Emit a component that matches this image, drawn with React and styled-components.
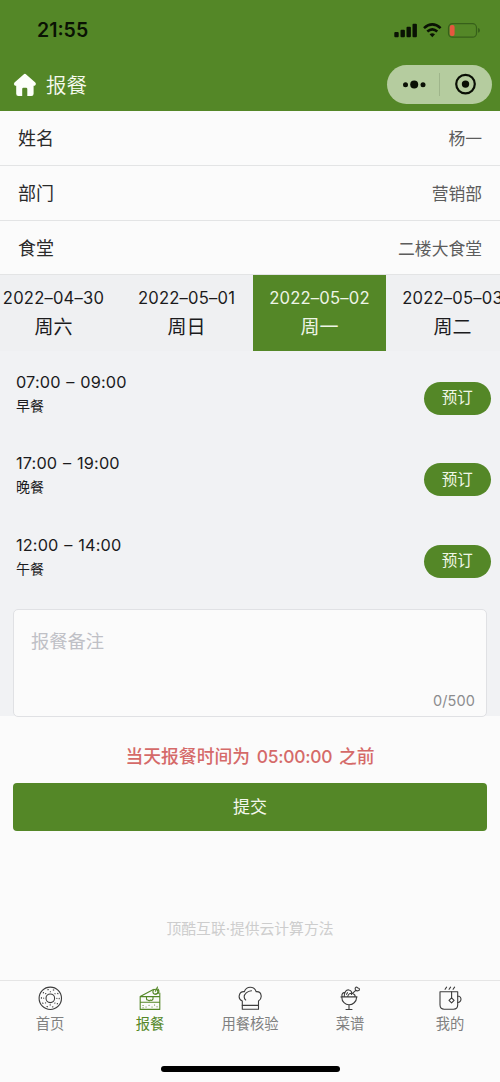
import React, { useState } from 'react';
import styled, { createGlobalStyle } from 'styled-components';

const GREEN = '#548727';

const GlobalStyle = createGlobalStyle`
  * {
    box-sizing: border-box;
  }

  body {
    margin: 0;
    background: #fbfbfb;
    color: #1c1c1c;
    font-family: Inter, 'Noto Sans CJK SC', sans-serif;
  }

  button, textarea {
    font-family: inherit;
  }
`;

const Page = styled.div`
  width: 500px;
  height: 1082px;
  display: flex;
  flex-direction: column;
  overflow: hidden;
`;

const Header = styled.header`
  height: 111px;
  flex: none;
  background: ${GREEN};
`;

const StatusBar = styled.div`
  height: 59px;
  padding: 0 20px 0 37px;
  display: flex;
  align-items: center;
  justify-content: space-between;
`;

const Clock = styled.span`
  font-size: 19.5px;
  font-weight: 600;
  line-height: 24px;
  color: #0a1204;
  padding-top: 1px;
`;

const NavBar = styled.div`
  height: 51px;
  padding: 0 8px 0 13px;
  display: flex;
  align-items: center;
`;

const Title = styled.h1`
  flex: 1;
  margin: 0 0 0 9px;
  padding-top: 2px;
  font-size: 20.5px;
  font-weight: 350;
  line-height: 28px;
  color: #f6faef;
`;

const Capsule = styled.div`
  width: 105px;
  height: 39px;
  border-radius: 20px;
  background: #b5cc9f;
`;

const InfoRow = styled.div`
  height: ${(props) => props.$height}px;
  flex: none;
  padding: 2px 18px 0;
  border-bottom: 1px solid #e3e4e5;
  display: flex;
  align-items: center;
  justify-content: space-between;
  line-height: 26px;
`;

const InfoLabel = styled.span`
  font-size: 18px;
  color: #2a2a2a;
`;

const InfoValue = styled.span`
  font-size: 16.8px;
  color: #5c5c5c;
`;

const Booking = styled.main`
  height: 441px;
  flex: none;
  background: #f1f2f4;
`;

const DateStrip = styled.div`
  display: flex;
  height: 76px;
  margin-left: -13px;
`;

const DateItem = styled.button`
  flex: none;
  width: 133px;
  padding: 10px 0 0;
  border: 0;
  background: ${(props) => (props.$active ? GREEN : '#eff0f2')};
  color: ${(props) => (props.$active ? '#eef5e6' : '#1b1b1d')};
  display: flex;
  flex-direction: column;
  align-items: center;
  white-space: nowrap;
`;

const DateText = styled.span`
  font-size: 16.6px;
  letter-spacing: 0.2px;
  line-height: 26px;
`;

const WeekText = styled.span`
  padding-top: 2px;
  font-size: 19px;
  line-height: 30px;
`;

const Meal = styled.div`
  height: 81.5px;
  padding: 0 9.5px 0 16px;
  display: flex;
  align-items: center;
  justify-content: space-between;
`;

const MealTime = styled.div`
  font-size: 16.3px;
  letter-spacing: 0.15px;
  word-spacing: 1px;
  line-height: 24px;
  color: #1b1b1d;
`;

const MealName = styled.div`
  font-size: 14px;
  line-height: 23px;
  color: #1b1b1d;
`;

const MealInfo = styled.div`
  padding-top: 3px;
`;

const BookButton = styled.button`
  width: 66.5px;
  height: 33px;
  margin-top: 13px;
  padding: 0;
  border: 0;
  border-radius: 17px;
  background: ${GREEN};
  color: #f0f7e6;
  font-size: 15.5px;
  line-height: 24px;
`;

const Remark = styled.label`
  height: 108px;
  margin: 13px 13px 0;
  padding: 17px 11px 3px 17px;
  border: 1px solid #e0e1e4;
  border-radius: 5px;
  background: #fbfbfb;
  display: flex;
  flex-direction: column;
`;

const RemarkInput = styled.textarea`
  flex: 1;
  min-height: 0;
  padding: 0;
  border: 0;
  outline: 0;
  resize: none;
  background: transparent;
  font-size: 18.3px;
  line-height: 28px;
  color: #2a2a2a;

  &::placeholder {
    color: #bfc0c6;
    opacity: 1;
  }
`;

const Counter = styled.span`
  align-self: flex-end;
  font-size: 14.5px;
  line-height: 24px;
  letter-spacing: 0.1px;
  color: #8c8c8e;
`;

const Notice = styled.p`
  margin: 27px 0 12px;
  text-align: center;
  font-size: 17.8px;
  font-weight: 500;
  line-height: 28px;
  color: #d56a69;
  white-space: nowrap;
`;

const Deadline = styled.span`
  margin: 0 2px;
  font-size: 17.4px;
  letter-spacing: -0.25px;
`;

const SubmitButton = styled.button`
  height: 48px;
  flex: none;
  margin: 0 13px;
  padding: 0 0 4px;
  border: 0;
  border-radius: 4px;
  background: ${GREEN};
  color: #f3f8ec;
  font-size: 17px;
`;

const Copyright = styled.p`
  margin: 86px 0 0;
  text-align: center;
  font-size: 14.8px;
  line-height: 24px;
  color: #cdcdcd;
`;

const TabBar = styled.nav`
  height: 102px;
  margin-top: auto;
  flex: none;
  border-top: 1px solid #e5e5e5;
  display: flex;
  flex-direction: column;
  align-items: center;
`;

const Tabs = styled.div`
  width: 100%;
  height: 85px;
  display: grid;
  grid-template-columns: repeat(5, 1fr);
`;

const Tab = styled.button`
  padding: 4px 0 0;
  border: 0;
  background: none;
  display: flex;
  flex-direction: column;
  align-items: center;
  color: ${(props) => (props.$active ? GREEN : '#3c3c3c')};
`;

const TabLabel = styled.span`
  padding-top: 2px;
  font-size: 14.3px;
  line-height: 22px;
  color: ${(props) => (props.$active ? GREEN : '#808080')};
`;

const HomeIndicator = styled.div`
  width: 179px;
  height: 6px;
  border-radius: 3px;
  background: #000;
`;

const StatusIcons = () => (
  <svg width="87" height="18" viewBox="0 0 87 18" fill="#0a1204">
    <rect x="1.3" y="11" width="4.4" height="5.3" rx="1" />
    <rect x="7.5" y="8.7" width="4.4" height="7.6" rx="1" />
    <rect x="13.5" y="5.8" width="4.4" height="10.5" rx="1" />
    <rect x="19.5" y="2.7" width="4.4" height="13.6" rx="1" />
    <g fill="none" stroke="#0a1204" strokeWidth="2.6">
      <path d="M31 7.1 Q39.3 -0.5 47.6 7.1" />
      <path d="M34.3 10.5 Q39.3 6.2 44.3 10.5" />
    </g>
    <path d="M36.6 13.2 Q39.3 11.2 42 13.2 L39.3 16.2 Z" />
    <rect x="55.5" y="2.7" width="28" height="13.5" rx="4" fill="none" stroke="#37601a" strokeWidth="1.2" />
    <rect x="56.8" y="4" width="4.8" height="11" rx="2" fill="#e5573f" />
    <path d="M85 7 Q87 7.4 87 9.4 Q87 11.4 85 11.8 Z" fill="#37601a" />
  </svg>
);

const HomeIcon = () => (
  <svg width="24" height="24" viewBox="0 0 24 24" fill="#fdfffa">
    <path d="M10.6 1.4 Q11.9 0.2 13.2 1.4 L22.3 9.6 Q23.8 11.4 22.1 12.4 Q21.4 12.8 20.6 12.7 V20.8 Q20.6 23 18.4 23 H14.3 V16 Q14.3 14.7 13.1 14.7 H10.4 Q9.2 14.7 9.2 16 V23 H5.4 Q3.2 23 3.2 20.8 V12.7 Q2.4 12.8 1.7 12.4 Q0.1 11.4 1.5 9.6 Z" />
  </svg>
);

const CapsuleIcons = () => (
  <svg width="105" height="39" viewBox="0 0 105 39" fill="#0a0f05">
    <circle cx="18.5" cy="19.8" r="2.5" />
    <circle cx="27.2" cy="19.6" r="4" />
    <circle cx="36" cy="19.8" r="2.5" />
    <rect x="52" y="8" width="1" height="23" fill="#9fb58b" />
    <circle cx="78.5" cy="19.1" r="9.3" fill="none" stroke="#0a0f05" strokeWidth="2.2" />
    <circle cx="78.5" cy="19.1" r="3.7" />
  </svg>
);

const TabIcon = ({ children }) => (
  <svg
    width="26"
    height="26"
    viewBox="0 0 26 26"
    fill="none"
    stroke="currentColor"
    strokeWidth="1.1"
    strokeLinecap="round"
    strokeLinejoin="round"
  >
    {children}
  </svg>
);

const DonutIcon = () => (
  <TabIcon>
    <circle cx="13.3" cy="13.3" r="11.2" />
    <circle cx="13.3" cy="13.3" r="4.3" />
    <circle cx="13.3" cy="13.3" r="6.6" strokeDasharray="0.2 4.95" />
    <circle cx="13.3" cy="13.3" r="8.9" strokeDasharray="0.5 5.09" />
  </TabIcon>
);

const CakeIcon = () => (
  <TabIcon>
    <path d="M3.2 11.6 H22.8 V24.4 H3.2 Z M3.2 17.2 H22.8 M3.2 11.6 L16.4 4.4 M22.8 11.6 V8" />
    <path d="M9.5 11.8 V13.6 Q9.5 15.2 11 15 Q12 16.4 13.4 15 Q15.2 16 16 14 V11.8" />
    <circle cx="18.4" cy="6.7" r="2.5" />
    <path d="M18.4 6.3 L20.5 2 M20.8 4 Q22.7 5.6 21.4 8.2 L18 9.2" />
    <path d="M6 20.5 H6.1 M9 22 H9.1 M12 20.2 H12.1 M15 22 H15.1 M17.5 20 H17.6 M20 21.8 H20.1 M6 22.7 H6.1" />
  </TabIcon>
);

const ChefHatIcon = () => (
  <TabIcon>
    <path d="M5.3 24.3 V16 C2.4 14.7 1.8 12.6 2.3 10.3 C3 7.5 5.3 6.5 7.3 6.7 C8.3 3.8 10.4 2.2 13.3 2.2 C16.2 2.2 18.2 3.8 19.2 6.7 C21.5 6.5 23.7 8 24.1 10.4 C24.5 12.9 23.4 14.9 21.5 16 V24.3 Z" />
    <path d="M5.3 20.4 H21.5 M14.5 5.8 C10.4 6 7 9.2 7.2 12.1 Q7.4 14 8.7 15" />
  </TabIcon>
);

const IceCreamIcon = () => (
  <TabIcon>
    <path d="M4 11.9 H20 M4.8 12.2 C4.8 16.8 8.3 19.8 12 19.8 C15.7 19.8 19.6 16.8 19.6 12.2 M12 19.8 V24.4 M9 24.5 H15" />
    <path d="M7.2 11.5 C7.2 7 9.2 4.4 12 5 C14.3 5.4 15.4 7.5 14.4 9.5 M5.2 11.5 C4.1 9.4 6 7 8 7.8 M10.7 11.5 C11.4 8.5 13.5 7.8 15.5 8.5 C17.7 9.2 18.3 10.4 18 11.5 M10.5 7.7 L9.5 9.3" />
    <path d="M15.7 8.2 L18.8 5.3 M18.4 5 C17.3 2.3 20.1 1.3 20.8 3 C22.8 2.8 23.1 5.5 21 5.8 Q19.6 6.2 18.4 5 Z" />
  </TabIcon>
);

const CupIcon = () => (
  <TabIcon>
    <path d="M3 6.7 H20.7 V19.8 Q20.7 24.2 16.5 24.2 H7.2 Q3 24.2 3 19.8 Z" />
    <path d="M20.7 11.2 H22 Q24 11.8 24 13.9 Q24 17 20.7 17.5 M14.6 6.7 V12.9" />
    <path d="M14.6 12.8 L17.1 15.3 L14.6 17.9 L12 15.3 Z" />
    <path d="M8.1 4.3 L9.6 2.1 M12.1 4.3 L13.6 2.1 M16.1 4.3 L17.6 2.1" />
  </TabIcon>
);

const info = [
  { label: '姓名', value: '杨一', height: 55 },
  { label: '部门', value: '营销部', height: 55 },
  { label: '食堂', value: '二楼大食堂', height: 54 },
];

const dates = [
  { date: '2022–04–30', week: '周六' },
  { date: '2022–05–01', week: '周日' },
  { date: '2022–05–02', week: '周一' },
  { date: '2022–05–03', week: '周二' },
];

const meals = [
  { time: '07:00 – 09:00', name: '早餐' },
  { time: '17:00 – 19:00', name: '晚餐' },
  { time: '12:00 – 14:00', name: '午餐' },
];

const tabs = [
  { label: '首页', Icon: DonutIcon },
  { label: '报餐', Icon: CakeIcon },
  { label: '用餐核验', Icon: ChefHatIcon },
  { label: '菜谱', Icon: IceCreamIcon },
  { label: '我的', Icon: CupIcon },
];

const App = () => {
  const [selected, setSelected] = useState(2);
  const [activeTab, setActiveTab] = useState(1);
  const [remark, setRemark] = useState('');

  return (
    <>
      <GlobalStyle />
      <Page>
        <Header>
          <StatusBar>
            <Clock>21:55</Clock>
            <StatusIcons />
          </StatusBar>
          <NavBar>
            <HomeIcon />
            <Title>报餐</Title>
            <Capsule>
              <CapsuleIcons />
            </Capsule>
          </NavBar>
        </Header>

        {info.map((row) => (
          <InfoRow key={row.label} $height={row.height}>
            <InfoLabel>{row.label}</InfoLabel>
            <InfoValue>{row.value}</InfoValue>
          </InfoRow>
        ))}

        <Booking>
          <DateStrip>
            {dates.map((item, index) => (
              <DateItem key={item.date} $active={index === selected} onClick={() => setSelected(index)}>
                <DateText>{item.date}</DateText>
                <WeekText>{item.week}</WeekText>
              </DateItem>
            ))}
          </DateStrip>
          {meals.map((meal) => (
            <Meal key={meal.name}>
              <MealInfo>
                <MealTime>{meal.time}</MealTime>
                <MealName>{meal.name}</MealName>
              </MealInfo>
              <BookButton>预订</BookButton>
            </Meal>
          ))}
          <Remark>
            <RemarkInput
              placeholder="报餐备注"
              maxLength={500}
              value={remark}
              onChange={(e) => setRemark(e.target.value)}
            />
            <Counter>{remark.length}/500</Counter>
          </Remark>
        </Booking>

        <Notice>
          当天报餐时间为 <Deadline>05:00:00</Deadline> 之前
        </Notice>
        <SubmitButton>提交</SubmitButton>
        <Copyright>顶酷互联·提供云计算方法</Copyright>

        <TabBar>
          <Tabs>
            {tabs.map(({ label, Icon }, index) => (
              <Tab key={label} $active={index === activeTab} onClick={() => setActiveTab(index)}>
                <Icon />
                <TabLabel $active={index === activeTab}>{label}</TabLabel>
              </Tab>
            ))}
          </Tabs>
          <HomeIndicator />
        </TabBar>
      </Page>
    </>
  );
};

export default App;
